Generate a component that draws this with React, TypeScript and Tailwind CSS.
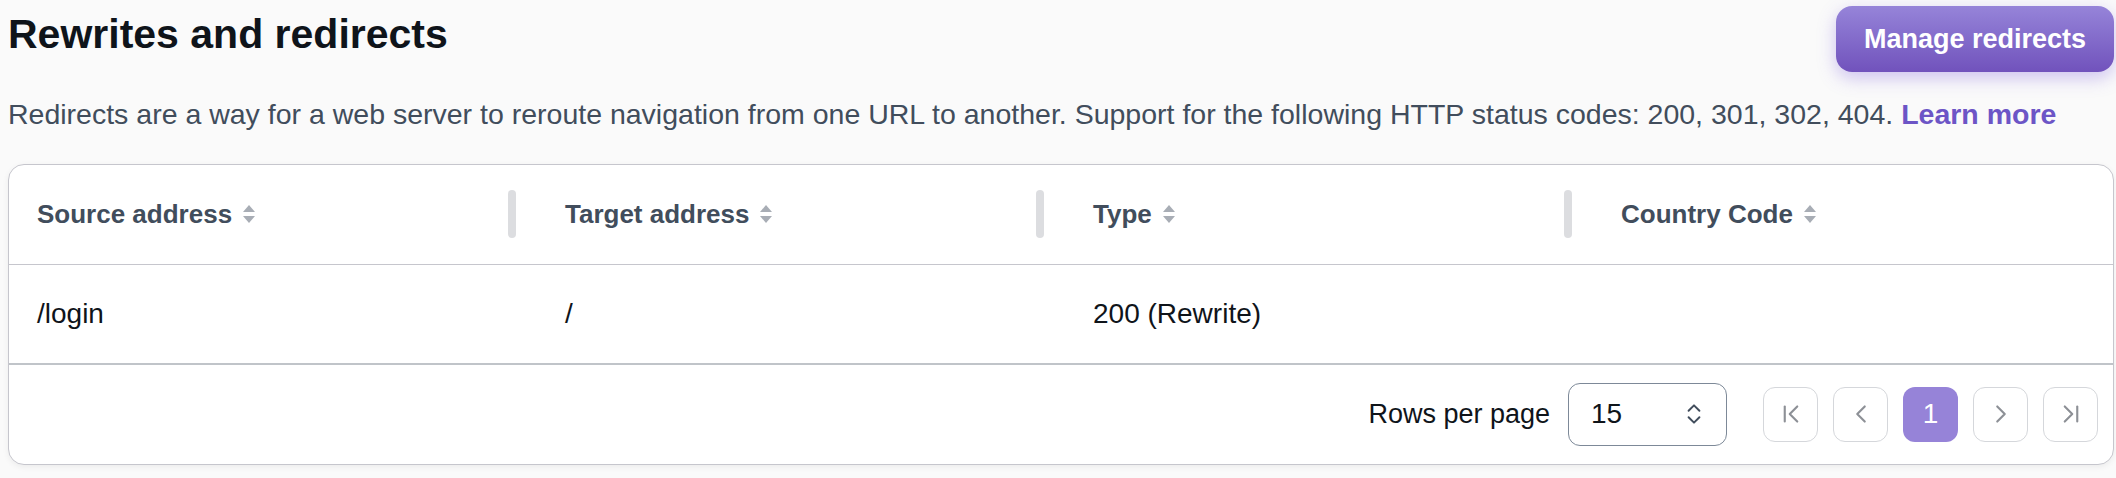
import { ChevronFirst, ChevronLast, ChevronLeft, ChevronRight, ChevronsUpDown } from "lucide-react";

const font = { fontFamily: '"Liberation Sans", Arial, sans-serif' };

const SortIcon = () => (
    <svg width="14" height="20" viewBox="0 0 14 20" className="shrink-0">
        <polygon points="7,1 13,8 1,8" fill="#a8adb5" />
        <polygon points="1,12 13,12 7,19" fill="#a8adb5" />
    </svg>
);

const HeaderCell = ({ label, handle = true }: { label: string; handle?: boolean }) => (
    <div className="flex items-center justify-between pl-[28px] pr-[21px]">
        <div className="flex items-center gap-[10px]">
            <span className="text-[26px] leading-none font-bold text-[#414d5c]">{label}</span>
            <SortIcon />
        </div>
        {handle && <div className="w-[8px] h-[48px] rounded-full bg-[#dcdde0]" />}
    </div>
);

const PageButton = ({ children, active = false }: { children: React.ReactNode; active?: boolean }) => (
    <button
        className={
            active
                ? "w-[55px] h-[55px] rounded-[12px] bg-[#9683d8] text-white text-[28px] leading-none flex items-center justify-center"
                : "w-[55px] h-[55px] rounded-[12px] border-[1.5px] border-[#d5d7db] bg-white text-[#8d9096] flex items-center justify-center"
        }
    >
        {children}
    </button>
);

export default function App() {
    return (
        <div style={font} className="w-full min-h-screen bg-[#fafafa] pl-[8px] pr-[2px]">

            {/* Titulo y boton */}
            <div className="flex justify-between items-start h-[78px]">
                <h1 className="mt-[14px] text-[41px] leading-none font-bold text-[#0f141a]">Rewrites and redirects</h1>
                <button className="mt-[6px] h-[66px] px-[28px] rounded-[16px] bg-gradient-to-b from-[#9684d9] to-[#7152bc] text-white text-[27px] font-bold leading-none shadow-[0_6px_18px_rgba(120,90,220,0.35)]">
                    Manage redirects
                </button>
            </div>

            <p className="mt-[22px] text-[28.5px] leading-none text-[#414d5c]">
                Redirects are a way for a web server to reroute navigation from one URL to another. Support for the following HTTP status codes: 200, 301, 302, 404.{" "}
                <a href="#" className="font-bold text-[#6c55c6]">Learn more</a>
            </p>

            {/* Tabla */}
            <div className="mt-[35px] bg-white border border-[#c6c6cd] rounded-[16px] shadow-[0_2px_6px_rgba(0,0,0,0.06)] overflow-hidden">
                <div className="grid grid-cols-[528px_528px_528px_1fr] h-[100px] border-b border-[#c6c6cd]">
                    <HeaderCell label="Source address" />
                    <HeaderCell label="Target address" />
                    <HeaderCell label="Type" />
                    <HeaderCell label="Country Code" handle={false} />
                </div>

                <div className="grid grid-cols-[528px_528px_528px_1fr] h-[100px] border-b-2 border-[#c0c4c9] items-center text-[28px] leading-none text-[#0f141a]">
                    <div className="pl-[28px]">/login</div>
                    <div className="pl-[28px]">/</div>
                    <div className="pl-[28px]">200 (Rewrite)</div>
                    <div className="pl-[28px]"></div>
                </div>

                {/* Paginacion */}
                <div className="h-[99px] flex items-center justify-end pr-[15px]">
                    <span className="text-[27px] leading-none text-[#0f141a]">Rows per page</span>
                    <div className="ml-[18px] w-[159px] h-[63px] rounded-[12px] border-[1.5px] border-[#7d8998] flex items-center justify-between pl-[22px] pr-[19px]">
                        <span className="text-[28px] leading-none text-[#0f141a]">15</span>
                        <ChevronsUpDown size={26} strokeWidth={1.8} color="#414d5c" />
                    </div>
                    <div className="ml-[36px] flex gap-[15px]">
                        <PageButton><ChevronFirst size={30} strokeWidth={1.7} /></PageButton>
                        <PageButton><ChevronLeft size={30} strokeWidth={1.7} /></PageButton>
                        <PageButton active>1</PageButton>
                        <PageButton><ChevronRight size={30} strokeWidth={1.7} /></PageButton>
                        <PageButton><ChevronLast size={30} strokeWidth={1.7} /></PageButton>
                    </div>
                </div>
            </div>
        </div>
    );
}
